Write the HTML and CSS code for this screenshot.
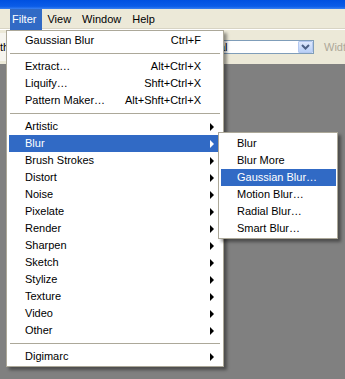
FILE: index.html
```html
<!DOCTYPE html>
<html lang="en">
<head>
  <meta charset="UTF-8">
  <title>Filter menu</title>
  <link rel="stylesheet" href="styles.css">
</head>
<body>

<div class="titlebar"></div>

<div class="menubar">
  <span class="top-item open">Filter</span>
  <span class="top-item">View</span>
  <span class="top-item">Window</span>
  <span class="top-item">Help</span>
</div>

<div class="toolbar">
  <div class="tool-label">th</div>
  <div class="combo">
    <span class="combo-text">Normal</span>
    <span class="combo-btn">
      <svg width="9" height="6" viewBox="0 0 9 6"><path d="M1 1 L4.5 4.5 L8 1" fill="none" stroke="#4d6185" stroke-width="2"/></svg>
    </span>
  </div>
  <div class="disabled-label">Width:</div>
</div>

<div class="workspace"></div>

<div class="menu main-menu">
  <div class="item"><span class="label">Gaussian Blur</span><span class="key">Ctrl+F</span></div>
  <div class="sep"></div>
  <div class="item"><span class="label">Extract…</span><span class="key">Alt+Ctrl+X</span></div>
  <div class="item"><span class="label">Liquify…</span><span class="key">Shft+Ctrl+X</span></div>
  <div class="item"><span class="label">Pattern Maker…</span><span class="key">Alt+Shft+Ctrl+X</span></div>
  <div class="sep"></div>
  <div class="item sub"><span class="label">Artistic</span><span class="arrow"></span></div>
  <div class="item sub active"><span class="label">Blur</span><span class="arrow"></span></div>
  <div class="item sub"><span class="label">Brush Strokes</span><span class="arrow"></span></div>
  <div class="item sub"><span class="label">Distort</span><span class="arrow"></span></div>
  <div class="item sub"><span class="label">Noise</span><span class="arrow"></span></div>
  <div class="item sub"><span class="label">Pixelate</span><span class="arrow"></span></div>
  <div class="item sub"><span class="label">Render</span><span class="arrow"></span></div>
  <div class="item sub"><span class="label">Sharpen</span><span class="arrow"></span></div>
  <div class="item sub"><span class="label">Sketch</span><span class="arrow"></span></div>
  <div class="item sub"><span class="label">Stylize</span><span class="arrow"></span></div>
  <div class="item sub"><span class="label">Texture</span><span class="arrow"></span></div>
  <div class="item sub"><span class="label">Video</span><span class="arrow"></span></div>
  <div class="item sub"><span class="label">Other</span><span class="arrow"></span></div>
  <div class="sep"></div>
  <div class="item sub"><span class="label">Digimarc</span><span class="arrow"></span></div>
</div>

<div class="menu blur-menu">
  <div class="item"><span class="label">Blur</span></div>
  <div class="item"><span class="label">Blur More</span></div>
  <div class="item active"><span class="label">Gaussian Blur…</span></div>
  <div class="item"><span class="label">Motion Blur…</span></div>
  <div class="item"><span class="label">Radial Blur…</span></div>
  <div class="item"><span class="label">Smart Blur…</span></div>
</div>

</body>
</html>
```

FILE: styles.css
```css
html, body {
  margin: 0;
  padding: 0;
}
body {
  width: 345px;
  height: 379px;
  overflow: hidden;
  position: relative;
  font-family: "Liberation Sans", Arial, sans-serif;
  font-size: 11px;
  color: #000;
  background: #808080;
}

.titlebar {
  height: 9px;
  background: linear-gradient(#0050e0, #0a5ce8 70%, #3a80f0);
}

.menubar {
  height: 21px;
  display: flex;
  gap: 3px;
  padding-left: 10px;
  background: #ece9d8;
  box-shadow: inset 0 -1px #fff, inset 0 -2px #d8d4c4;
}
.top-item {
  line-height: 21px;
  padding: 0 6px 0 2px;
}
.top-item.open {
  background: #316ac5;
  color: #fff;
}

.toolbar {
  height: 34px;
  display: flex;
  align-items: center;
  white-space: nowrap;
  background: #ece9d8;
}
.tool-label {
  flex-shrink: 0;
  width: 9px;
  height: 28px;
  line-height: 28px;
  background: #f6f5ef;
}
.combo {
  flex-shrink: 0;
  margin-left: 178px;
  width: 127px;
  height: 14px;
  box-sizing: border-box;
  border: 1px solid #7f9db9;
  background: #fff;
  display: flex;
  align-items: center;
  justify-content: space-between;
  padding: 0 0 0 4px;
}
.combo-text {
  line-height: 12px;
}
.combo-btn {
  width: 15px;
  height: 12px;
  box-sizing: border-box;
  border: 1px solid #b4c8f0;
  border-radius: 1px;
  background: linear-gradient(#dfe9fd, #b9d0f7);
  display: flex;
  align-items: center;
  justify-content: center;
}
.disabled-label {
  flex-shrink: 0;
  margin-left: 10px;
  color: #aca899;
}

.workspace {
  height: 315px;
  background: #808080;
}

/* drop-down menus lie over the workspace */
.menu {
  position: absolute;
  box-sizing: border-box;
  background: #fff;
  border: 1px solid #aca899;
  box-shadow: 3px 3px 3px rgba(0, 0, 0, 0.4);
}
.main-menu {
  left: 6px;
  top: 30px;
  width: 218px;
  padding: 1px 2px;
}
.blur-menu {
  left: 218px;
  top: 132px;
  width: 120px;
  padding: 2px 1px 1px 2px;
}

.item {
  height: 17px;
  line-height: 17px;
  display: flex;
  align-items: center;
  padding-left: 16px;
  white-space: nowrap;
}
.item .label {
  flex: 1;
}
.item .key {
  padding-right: 20px;
}
.item.active {
  background: #316ac5;
  color: #fff;
}
.arrow {
  width: 0;
  height: 0;
  margin-right: 7px;
  border-left: 4px solid #000;
  border-top: 4px solid transparent;
  border-bottom: 4px solid transparent;
}
.item.active .arrow {
  border-left-color: #fff;
}

.sep {
  height: 1px;
  margin: 4px 1px;
  background: #aca899;
}
```
